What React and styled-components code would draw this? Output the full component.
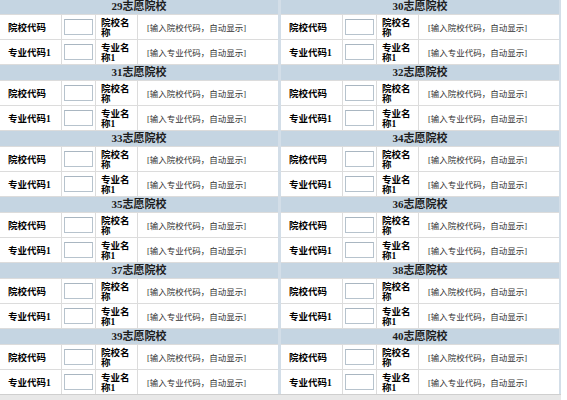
import React from "react";
import styled, { createGlobalStyle } from "styled-components";

const GlobalStyle = createGlobalStyle`
  html, body {
    margin: 0;
    padding: 0;
    background: #fff;
  }
  body {
    font-family: "Liberation Serif", "Noto Sans CJK SC", serif;
    color: #000;
  }
`;

const Sheet = styled.div`
  width: 559px;
  margin-top: -2px;
  padding-right: 2px;
  display: grid;
  grid-template-columns: 278px 278px;
  column-gap: 3px;
  background: #d3dee8;
`;

const Block = styled.section`
  display: grid;
  grid-template-columns: 61px 33px 41px 1fr;
  grid-template-rows: 15px 24px 24px;
  gap: 1px;
  border-top: 1px solid #dcdcdc;
  background: #dcdcdc;
`;

const Title = styled.div`
  grid-column: 1 / -1;
  background: #c5d5e2;
  text-align: center;
  font-size: 11px;
  font-weight: bold;
  line-height: 15px;
  color: #1c1c1c;
`;

const Cell = styled.div`
  background: #fff;
  display: flex;
  align-items: center;
`;

const Label = styled(Cell)`
  padding-left: 8px;
  font-size: 9.5px;
  font-weight: bold;
  white-space: nowrap;
`;

const FieldCell = styled(Cell)`
  padding-left: 2px;
`;

const CodeInput = styled.input`
  box-sizing: border-box;
  width: 29px;
  height: 16px;
  margin: 0;
  padding: 0 2px;
  border: 1px solid #b7c3cd;
  border-top-color: #a9b6c1;
  background: #fff;
  font-size: 9px;
`;

const NameLabel = styled(Cell)`
  padding: 1px 3px 0 5px;
  font-size: 9.5px;
  font-weight: bold;
  line-height: 10px;
`;

const Hint = styled(Cell)`
  padding-left: 9px;
  font-size: 8.5px;
  color: #333;
  white-space: nowrap;
`;

const Footer = styled.div`
  width: 561px;
  height: 12px;
  border-top: 1px solid #cfcfcf;
  background: #e8e8e8;
`;

const choices = Array.from({ length: 12 }, (_, i) => 29 + i);

const ChoiceBlock = ({ no }) => (
  <Block>
    <Title>{no}志愿院校</Title>
    <Label>院校代码</Label>
    <FieldCell>
      <CodeInput type="text" />
    </FieldCell>
    <NameLabel>院校名称</NameLabel>
    <Hint>[输入院校代码，自动显示]</Hint>
    <Label>专业代码1</Label>
    <FieldCell>
      <CodeInput type="text" />
    </FieldCell>
    <NameLabel>专业名称1</NameLabel>
    <Hint>[输入专业代码，自动显示]</Hint>
  </Block>
);

export default function App() {
  return (
    <>
      <GlobalStyle />
      <Sheet>
        {choices.map((no) => (
          <ChoiceBlock key={no} no={no} />
        ))}
      </Sheet>
      <Footer />
    </>
  );
}
